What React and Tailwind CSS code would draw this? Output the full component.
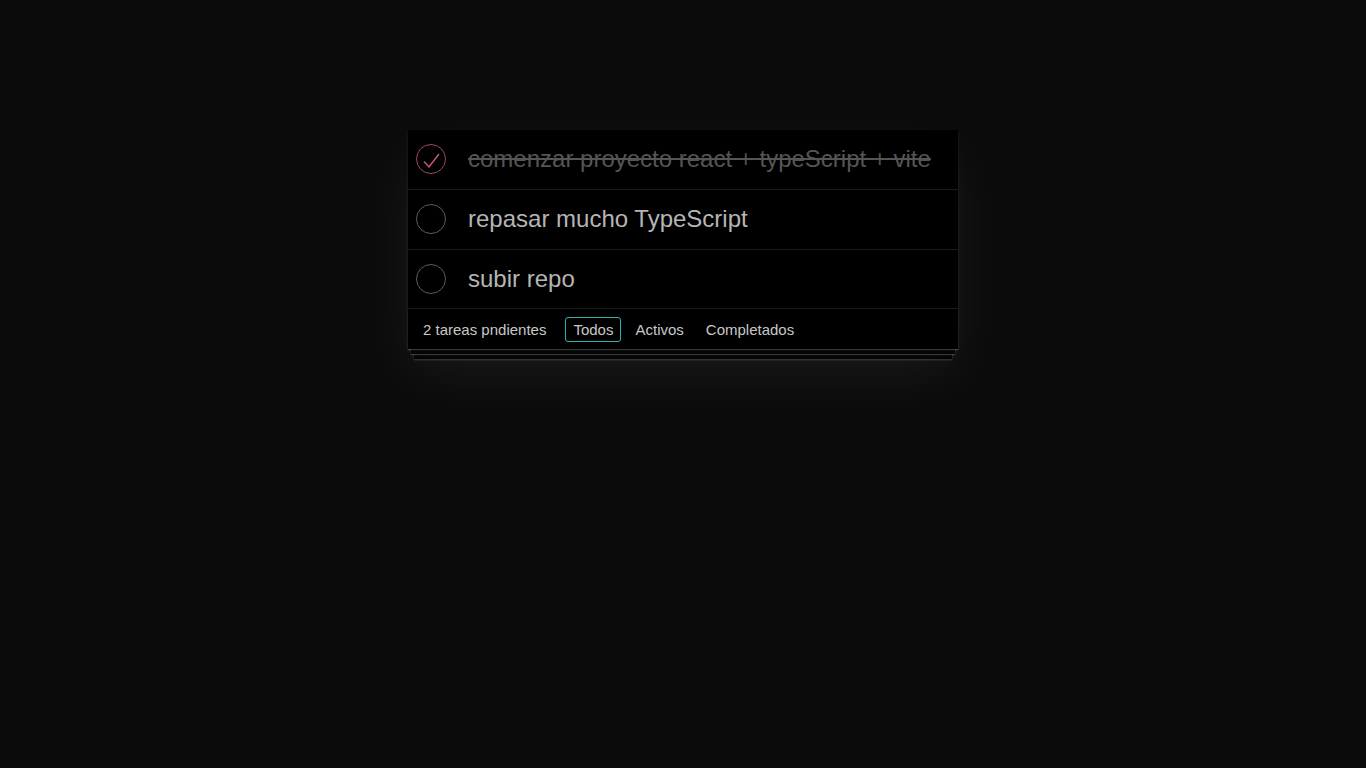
import { useState } from 'react'

const initialTodos = [
  { id: 1, title: 'comenzar proyecto react + typeScript + vite', completed: true },
  { id: 2, title: 'repasar mucho TypeScript', completed: false },
  { id: 3, title: 'subir repo', completed: false },
]

const FILTERS = ['Todos', 'Activos', 'Completados']

function Toggle({ checked, onClick }) {
  return (
    <button onClick={onClick} className="shrink-0 w-[44px] h-[40px] flex items-center justify-center">
      <svg width="44" height="40" viewBox="0 0 44 40" fill="none">
        <circle cx="23" cy="20" r="14.5" stroke={checked ? '#a0485e' : '#5c5c5c'} strokeWidth="1" />
        {checked && (
          <polyline points="16,22.5 21,28 31,15" stroke="#d4587a" strokeWidth="1.4" fill="none" />
        )}
      </svg>
    </button>
  )
}

export default function App() {
  const [todos, setTodos] = useState(initialTodos)
  const [filter, setFilter] = useState('Todos')

  const pending = todos.filter(t => !t.completed).length

  const toggle = (id) => {
    setTodos(todos.map(t => (t.id === id ? { ...t, completed: !t.completed } : t)))
  }

  const visible = todos.filter(t => {
    if (filter === 'Activos') return !t.completed
    if (filter === 'Completados') return t.completed
    return true
  })

  return (
    <div className="min-h-screen bg-[#0b0b0b] pt-[130px] font-['Liberation_Sans',Arial,sans-serif]">
      <div className="relative mx-auto w-[550px] bg-black shadow-[0_2px_4px_rgba(255,255,255,0.08),0_25px_50px_rgba(255,255,255,0.06)]">
        <ul>
          {visible.map(todo => (
            <li key={todo.id} className="flex items-center border-b border-[#1a1a1a]">
              <Toggle checked={todo.completed} onClick={() => toggle(todo.id)} />
              <label
                className={`block flex-1 pl-4 pr-[15px] py-[15px] text-[24px] leading-[1.2] whitespace-nowrap overflow-hidden ${
                  todo.completed ? 'text-[#555] line-through' : 'text-[#b5b5b5]'
                }`}
              >
                {todo.title}
              </label>
            </li>
          ))}
        </ul>

        {/* footer with stacked pages underneath */}
        <footer className="relative flex items-center h-[40px] px-[15px] text-[15px] leading-[17px] text-[#c8c8c8] before:absolute before:inset-x-0 before:bottom-0 before:h-[40px] before:pointer-events-none before:shadow-[0_1px_1px_rgba(255,255,255,0.2),0_8px_0_-3px_#050505,0_9px_1px_-3px_rgba(255,255,255,0.2),0_16px_0_-6px_#050505,0_17px_2px_-6px_rgba(255,255,255,0.2)]">
          <span className="relative">{pending} tareas pndientes</span>
          <ul className="relative flex items-center ml-4">
            {FILTERS.map(f => (
              <li key={f} className="flex">
                <button
                  onClick={() => setFilter(f)}
                  className={`mx-[3px] px-[7px] py-[3px] rounded-[3px] border leading-[17px] ${
                    filter === f ? 'border-[#2bb0b3]' : 'border-transparent'
                  }`}
                >
                  {f}
                </button>
              </li>
            ))}
          </ul>
        </footer>
      </div>
    </div>
  )
}
